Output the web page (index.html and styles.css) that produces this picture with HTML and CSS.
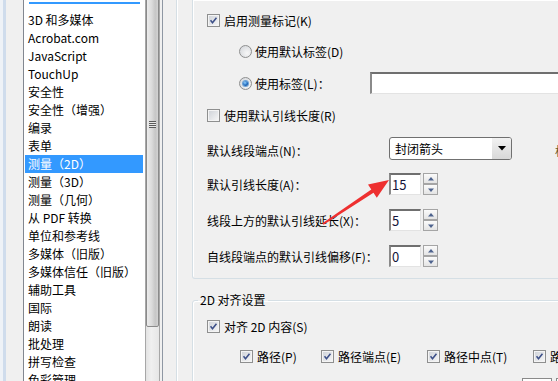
FILE: index.html
```html
<!DOCTYPE html>
<html lang="zh-CN">
<head>
    <meta charset="UTF-8">
    <title>首选项 - 测量（2D）</title>
    <link rel="stylesheet" href="styles.css">
</head>
<body>
    <div class="window">
        <div class="edge"></div>

        <div class="catlist">
            <div class="items">
                <div class="drop-line"></div>
                <div class="item">3D 和多媒体</div>
                <div class="item">Acrobat.com</div>
                <div class="item">JavaScript</div>
                <div class="item">TouchUp</div>
                <div class="item">安全性</div>
                <div class="item">安全性（增强）</div>
                <div class="item">编录</div>
                <div class="item">表单</div>
                <div class="item selected">测量（2D）</div>
                <div class="item">测量（3D）</div>
                <div class="item">测量（几何）</div>
                <div class="item">从 PDF 转换</div>
                <div class="item">单位和参考线</div>
                <div class="item">多媒体（旧版）</div>
                <div class="item">多媒体信任（旧版）</div>
                <div class="item">辅助工具</div>
                <div class="item">国际</div>
                <div class="item">朗读</div>
                <div class="item">批处理</div>
                <div class="item">拼写检查</div>
                <div class="item">色彩管理</div>
            </div>
            <div class="vscroll">
                <div class="thumb"><span class="grip"></span></div>
            </div>
        </div>

        <div class="pane">
            <div class="inner">
                <div class="group top-group">
                    <div class="row row-k">
                        <span class="cb checked"><svg viewBox="0 0 13 13"><path d="M3 6.3 L5.3 9.2 L10 3.2"/></svg></span>
                        <span class="cb-text">启用测量标记(K)</span>
                    </div>
                    <div class="row row-d indent">
                        <span class="radio"></span>
                        <span class="radio-text">使用默认标签(D)</span>
                    </div>
                    <div class="row row-l indent">
                        <span class="radio on"></span>
                        <span class="radio-text fixed">使用标签(L)：</span>
                        <span class="textbox wide"></span>
                    </div>
                    <div class="row row-r">
                        <span class="cb"></span>
                        <span class="cb-text">使用默认引线长度(R)</span>
                    </div>
                    <div class="row row-n">
                        <span class="field-label">默认线段端点(N)：</span>
                        <span class="combo">
                            <span class="combo-value">封闭箭头</span>
                            <span class="combo-btn"><svg viewBox="0 0 8 5"><path d="M0 0 H8 L4 4.5 Z"/></svg></span>
                        </span>
                        <span class="cut-label">标</span>
                    </div>
                    <div class="row row-a">
                        <span class="field-label">默认引线长度(A)：</span>
                        <span class="spin">
                            <span class="textbox num">15</span>
                            <span class="spin-btns">
                                <span class="spin-btn"><svg viewBox="0 0 6 4"><path d="M0 3.5 L3 0 L6 3.5 Z"/></svg></span>
                                <span class="spin-btn"><svg viewBox="0 0 6 4"><path d="M0 0.5 L3 4 L6 0.5 Z"/></svg></span>
                            </span>
                        </span>
                    </div>
                    <div class="row row-x">
                        <span class="field-label">线段上方的默认引线延长(X)：</span>
                        <span class="spin">
                            <span class="textbox num">5</span>
                            <span class="spin-btns">
                                <span class="spin-btn"><svg viewBox="0 0 6 4"><path d="M0 3.5 L3 0 L6 3.5 Z"/></svg></span>
                                <span class="spin-btn"><svg viewBox="0 0 6 4"><path d="M0 0.5 L3 4 L6 0.5 Z"/></svg></span>
                            </span>
                        </span>
                    </div>
                    <div class="row row-f">
                        <span class="field-label">自线段端点的默认引线偏移(F)：</span>
                        <span class="spin">
                            <span class="textbox num">0</span>
                            <span class="spin-btns">
                                <span class="spin-btn"><svg viewBox="0 0 6 4"><path d="M0 3.5 L3 0 L6 3.5 Z"/></svg></span>
                                <span class="spin-btn"><svg viewBox="0 0 6 4"><path d="M0 0.5 L3 4 L6 0.5 Z"/></svg></span>
                            </span>
                        </span>
                    </div>
                </div>

                <fieldset class="group align-group">
                    <legend>2D 对齐设置</legend>
                    <div class="row row-s">
                        <span class="cb checked"><svg viewBox="0 0 13 13"><path d="M3 6.3 L5.3 9.2 L10 3.2"/></svg></span>
                        <span class="cb-text">对齐 2D 内容(S)</span>
                    </div>
                    <div class="row snap-row">
                        <span class="snap">
                            <span class="cb checked"><svg viewBox="0 0 13 13"><path d="M3 6.3 L5.3 9.2 L10 3.2"/></svg></span>
                            <span class="cb-text">路径(P)</span>
                        </span>
                        <span class="snap">
                            <span class="cb checked"><svg viewBox="0 0 13 13"><path d="M3 6.3 L5.3 9.2 L10 3.2"/></svg></span>
                            <span class="cb-text">路径端点(E)</span>
                        </span>
                        <span class="snap">
                            <span class="cb checked"><svg viewBox="0 0 13 13"><path d="M3 6.3 L5.3 9.2 L10 3.2"/></svg></span>
                            <span class="cb-text">路径中点(T)</span>
                        </span>
                        <span class="snap">
                            <span class="cb checked"><svg viewBox="0 0 13 13"><path d="M3 6.3 L5.3 9.2 L10 3.2"/></svg></span>
                            <span class="cb-text">路径交点</span>
                        </span>
                    </div>
                    <div class="peek-row">
                        <span class="peek"></span>
                        <span class="peek"></span>
                    </div>
                </fieldset>
            </div>
        </div>
    </div>

    <!-- red annotation arrow pointing at the 15 field -->
    <svg class="annot" viewBox="0 0 558 381" width="558" height="381">
        <polygon points="389,180 376.8,197.8 373.5,192.8 323.6,224.8 322.4,223.2 371.3,189.4 368,184.4"/>
    </svg>
</body>
</html>
```

FILE: styles.css
```css
body {
    margin: 0;
    position: relative;
    font-family: "Noto Sans CJK SC", "Noto Sans", sans-serif;
    font-size: 12px;
    color: #000;
    background: #f0f0f0;
}
.window {
    display: flex;
    width: 558px;
    height: 381px;
    overflow: hidden;
    background: #f0f0f0;
}
.edge {
    width: 23px;
    flex-shrink: 0;
    background: linear-gradient(to right, #eef2f7 0 3px, #cfdcec 3px 6px, #f0f0f0 6px);
}

/* category list */
.catlist {
    display: flex;
    width: 136px;
    flex-shrink: 0;
    border-left: 1px solid #828790;
}
.items {
    width: 121px;
    background: #fff;
    padding-top: 2px;
}
.drop-line {
    height: 2px;
    margin: 0 5px 7px 5px;
    background: #3399ff;
}
.item {
    height: 18px;
    line-height: 18px;
    margin: 0 2px 0 1px;
    padding-left: 3px;
    white-space: nowrap;
}
.item.selected {
    background: #3399ff;
    color: #fff;
}
.vscroll {
    width: 15px;
    box-sizing: border-box;
    border-left: 1px solid #a7a7a7;
    border-right: 1px solid #a7a7a7;
    background: linear-gradient(to right, #e3e3e3, #f0f0f0 40%, #e6e6e6);
}
.thumb {
    height: 406px;
    margin-top: -79px;
    border: 1px solid #8a8a8a;
    border-radius: 2px;
    box-sizing: border-box;
    background: linear-gradient(to right, #ececec, #dadada 45%, #c6c6c6 75%, #d2d2d2);
    display: flex;
    align-items: center;
    justify-content: center;
}
.grip {
    width: 7px;
    height: 7px;
    background: repeating-linear-gradient(to bottom, #5b5b5b 0 1px, #e8e8e8 1px 2px);
}

/* settings panel */
.pane {
    flex: 1;
    min-width: 0;
    margin-left: 2px;
    padding-left: 13px;
    border-left: 1px solid #8e97a3;
}
.inner {
    height: 100%;
    padding-left: 15px;
    border-left: 1px solid #d5dfe5;
    box-shadow: inset 1px 0 0 #fff;
}
.group {
    width: 520px;
    border: 1px solid #d5dfe5;
    box-shadow: inset 1px 1px 0 #fff;
}
.top-group {
    height: 270px;
    padding-top: 8px;
    padding-left: 14px;
    border-top: none;
    border-radius: 0 0 3px 3px;
}
.row {
    display: flex;
    align-items: center;
    height: 24px;
    white-space: nowrap;
}
.row-d { margin-top: 7px; }
.row-l { margin-top: 8px; }
.row-r { margin-top: 8px; }
.row-n { margin-top: 11px; }
.row-a { margin-top: 10px; }
.row-x { margin-top: 12px; }
.row-f { margin-top: 12px; }
.indent { padding-left: 32px; }

/* checkboxes and radios */
.cb {
    width: 13px;
    height: 13px;
    flex-shrink: 0;
    box-sizing: border-box;
    border: 1px solid #8e8f8f;
    box-shadow: inset 0 0 0 1px #f4f4f4;
    background: linear-gradient(135deg, #cdd1d7, #f8f8f8);
}
.cb svg {
    display: block;
    width: 11px;
    height: 11px;
}
.cb path {
    fill: none;
    stroke: #3c4f88;
    stroke-width: 1.8;
}
.cb-text { margin-left: 4px; }
.radio {
    width: 13px;
    height: 13px;
    flex-shrink: 0;
    box-sizing: border-box;
    border: 1px solid #8e8f8f;
    border-radius: 50%;
    background: radial-gradient(circle at 65% 65%, #f7f7f7, #d0d3d8);
    display: flex;
    align-items: center;
    justify-content: center;
}
.radio.on::after {
    content: "";
    width: 5px;
    height: 5px;
    border-radius: 50%;
    background: radial-gradient(circle at 40% 35%, #8fd0ff, #1f6bbf 55%, #0d3c7d);
    box-shadow: 0 0 0 1px #6aa2d6;
}
.radio-text { margin-left: 3px; }
.radio-text.fixed { width: 115px; }

/* fields */
.textbox {
    display: block;
    height: 22px;
    box-sizing: border-box;
    background: #fff;
    border-style: solid;
    border-width: 2px 1px 1px 2px;
    border-color: #6f6f6f #e3e3e3 #e3e3e3 #8a8a8a;
}
.textbox.wide { width: 260px; }
.textbox.num {
    width: 32px;
    padding-left: 1px;
    line-height: 19px;
    font-size: 13px;
    color: #14143a;
}
.field-label { width: 182px; }
.combo {
    display: flex;
    width: 123px;
    height: 23px;
    margin-top: -3px;
    box-sizing: border-box;
    border: 1px solid #707070;
    border-radius: 3px;
    background: #fff;
    overflow: hidden;
}
.combo-value {
    flex: 1;
    padding-left: 5px;
    line-height: 21px;
}
.combo-btn {
    width: 19px;
    display: flex;
    align-items: center;
    justify-content: center;
    background: linear-gradient(to bottom, #f2f2f2, #d8d8d8);
}
.combo-btn svg {
    width: 8px;
    height: 5px;
}
.combo-btn path { fill: #000; }
.cut-label {
    margin-left: 43px;
    color: #6a5a30;
}
.spin {
    display: flex;
    gap: 2px;
}
.spin-btns {
    display: flex;
    flex-direction: column;
}
.spin-btn {
    width: 15px;
    height: 11px;
    box-sizing: border-box;
    border: 1px solid #a5a5a5;
    background: linear-gradient(to bottom, #fbfbfb, #e4e4e4);
    display: flex;
    align-items: center;
    justify-content: center;
}
.spin-btn svg {
    width: 6px;
    height: 4px;
}
.spin-btn path { fill: #4e638e; }

/* 2D snap group */
.align-group {
    margin: 13px 0 0 0;
    padding: 0 0 0 14px;
    border-radius: 3px;
    min-width: 0;
}
.align-group legend {
    margin-left: -9px;
    padding: 0 2px;
    line-height: 16px;
}
.row-s { margin-top: 6px; }
.snap-row {
    margin-top: 6px;
    padding-left: 33px;
}
.snap {
    display: flex;
    align-items: center;
    width: 106px;
}
.snap:first-child { width: 81px; }
.peek-row {
    display: flex;
    gap: 4px;
    margin-top: 10px;
    padding-left: 315px;
}
.peek {
    width: 30px;
    height: 20px;
    box-sizing: border-box;
    border: 1px solid #8a8a8a;
    background: #fff;
}

.annot {
    position: absolute;
    left: 0;
    top: 0;
    pointer-events: none;
}
.annot polygon { fill: #ee3030; }
```
